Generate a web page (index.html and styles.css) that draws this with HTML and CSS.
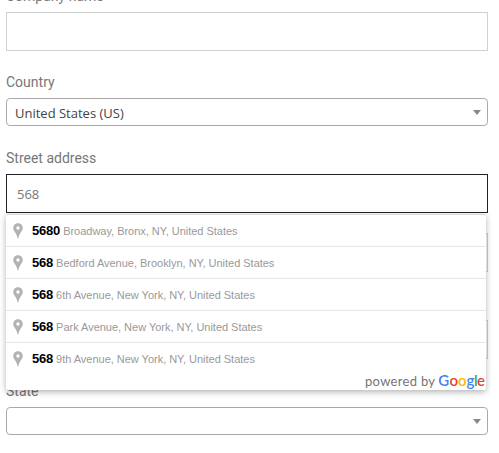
FILE: index.html
```
<!DOCTYPE html>
<html lang="en">
<head>
<meta charset="utf-8">
<title>Billing address</title>
<link rel="stylesheet" href="styles.css">
</head>
<body>
<svg class="defs" width="0" height="0"><symbol id="pin" viewBox="0 0 10 16"><path fill="#b3b3b3" fill-rule="evenodd" d="M5 .2A4.7 4.7 0 0 0 .2 4.9C.2 8.3 4 10 4.6 15.6h.8C6 10 9.8 8.3 9.8 4.9A4.7 4.7 0 0 0 5 .2Zm0 3.1a1.7 1.7 0 1 1 0 3.4 1.7 1.7 0 0 1 0-3.4Z"/></symbol></svg>
<form class="form">
  <div class="field company"><label>Company name</label><div class="input"></div></div>
  <div class="field"><label>Country</label><div class="select"><span>United States (US)</span><i class="arrow"></i></div></div>
  <div class="field street"><label>Street address</label><div class="input focused">568</div>
    <div class="suggestions">
      <div class="item"><svg class="pin"><use href="#pin"/></svg><b>5680</b><span>Broadway, Bronx, NY, United States</span></div>
      <div class="item"><svg class="pin"><use href="#pin"/></svg><b>568</b><span>Bedford Avenue, Brooklyn, NY, United States</span></div>
      <div class="item"><svg class="pin"><use href="#pin"/></svg><b>568</b><span>6th Avenue, New York, NY, United States</span></div>
      <div class="item"><svg class="pin"><use href="#pin"/></svg><b>568</b><span>Park Avenue, New York, NY, United States</span></div>
      <div class="item"><svg class="pin"><use href="#pin"/></svg><b>568</b><span>9th Avenue, New York, NY, United States</span></div>
      <svg class="credit" width="122" height="18">
        <text class="powered" x="1" y="12" textLength="70">powered by</text>
        <text class="google" y="12"><tspan x="74.2" fill="#4285f4">G</tspan><tspan x="85.4" fill="#ea4335">o</tspan><tspan x="94" fill="#fbbc05">o</tspan><tspan x="102.6" fill="#4285f4">g</tspan><tspan x="109.9" fill="#34a853">l</tspan><tspan x="112.9" fill="#ea4335">e</tspan></text>
      </svg>
    </div>
  </div>
  <div class="field line-two"><div class="input"></div></div>
  <div class="field town"><div class="input"></div></div>
  <div class="field"><label>State</label><div class="select"><i class="arrow"></i></div></div>
</form>
</body>
</html>
```
FILE: styles.css
```
* { box-sizing: border-box; }
html { overflow: hidden; }
body { margin: 0; background: #fff; height: 453px; overflow: hidden; }
.defs { display: block; }
.form { width: 482px; margin: -14px 0 0 6px; }
.field { margin-bottom: 22px; }
.company { margin-bottom: 21px; }
label { display: block; height: 20px; margin-bottom: 6px; font: 14px/20px Roboto, sans-serif; color: #777; }
.input { height: 39px; border: 1px solid #d0d0d0; padding: 0 10px; font: 13px/39px "Open Sans", sans-serif; color: #777; }
.focused { border-color: #222; }
.select { height: 28px; border: 1px solid #aaa; border-radius: 4px; padding: 0 6px 0 8px; display: flex; align-items: center; font: 13px/28px "Open Sans", sans-serif; color: #444; }
.select span { padding-top: 2px; }
.arrow { margin-left: auto; border: 4px solid transparent; border-top: 5px solid #888; border-bottom: 0; }
.street { position: relative; margin-bottom: 20px; }
.line-two { margin-bottom: 48px; }
.suggestions { position: absolute; z-index: 2; top: 66px; left: 0; width: 480px; height: 176px; background: #fff; border-top: 1px solid #d9d9d9; border-radius: 2px; box-shadow: 0 2px 6px rgba(0, 0, 0, .3); }
.item { height: 32px; border-bottom: 1px solid #e6e6e6; display: flex; align-items: baseline; font: 11px/31px "Liberation Sans", Arial, sans-serif; letter-spacing: -.02px; color: #999; }
.item:nth-child(5) { height: 31px; border: 0; }
.pin { width: 10px; height: 16px; margin: 0 9.5px 0 6.5px; align-self: center; }
.item b { font-size: 13px; letter-spacing: -.2px; color: #000; margin-right: 3px; }
.credit { display: block; margin-left: 358px; }
.powered { font: 13px Lato, sans-serif; fill: #757575; }
.google { font: 600 15px Lato, sans-serif; }
```
